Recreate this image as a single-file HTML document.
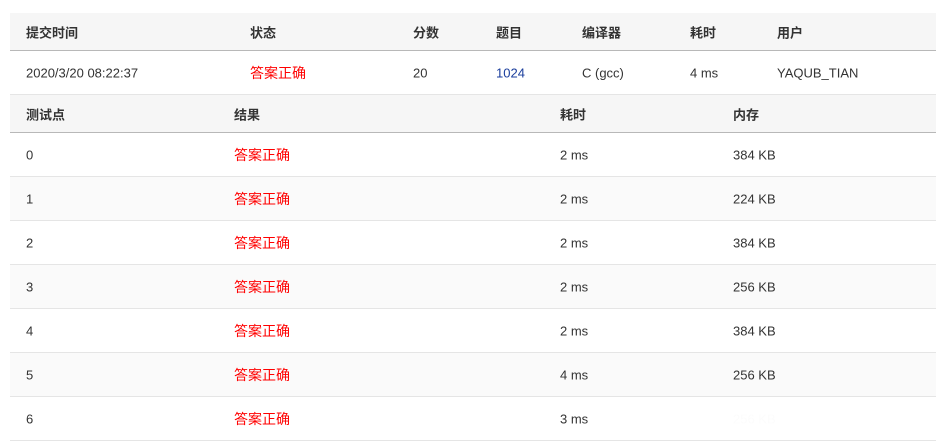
<!DOCTYPE html><html><head><meta charset="utf-8"><style>
body{margin:0;width:948px;height:440px;background:#fff;overflow:hidden;font-family:"Liberation Sans","Noto Sans CJK SC",sans-serif;font-size:13px;color:#333;position:relative}
.r{position:absolute;left:10px;width:926px;border-bottom:1px solid #e5e5e5;box-sizing:border-box}
.h{background:#f6f6f6;border-bottom:1px solid #b8b8b8;font-weight:bold;height:38px}
.d{height:44px}
.a{background:#fafafa}
.r span{position:absolute;top:50%;transform:translateY(-50%);white-space:nowrap}
.red{color:#f00;font-size:14px}
.blue{color:#1a3d9c}
</style></head><body>
<div class="r h" style="top:13px"><span style="left:16px">提交时间</span><span style="left:240px">状态</span><span style="left:403px">分数</span><span style="left:486px">题目</span><span style="left:572px">编译器</span><span style="left:680px">耗时</span><span style="left:767px">用户</span></div>
<div class="r d" style="top:51px"><span style="left:16px">2020/3/20 08:22:37</span><span class="red" style="left:240px">答案正确</span><span style="left:403px">20</span><span class="blue" style="left:486px">1024</span><span style="left:572px">C (gcc)</span><span style="left:680px">4 ms</span><span style="left:767px">YAQUB_TIAN</span></div>
<div class="r h" style="top:95px"><span style="left:16px">测试点</span><span style="left:224px">结果</span><span style="left:550px">耗时</span><span style="left:723px">内存</span></div>
<div class="r d" style="top:133px"><span style="left:16px">0</span><span class="red" style="left:224px">答案正确</span><span style="left:550px">2 ms</span><span style="left:723px">384 KB</span></div>
<div class="r d a" style="top:177px"><span style="left:16px">1</span><span class="red" style="left:224px">答案正确</span><span style="left:550px">2 ms</span><span style="left:723px">224 KB</span></div>
<div class="r d" style="top:221px"><span style="left:16px">2</span><span class="red" style="left:224px">答案正确</span><span style="left:550px">2 ms</span><span style="left:723px">384 KB</span></div>
<div class="r d a" style="top:265px"><span style="left:16px">3</span><span class="red" style="left:224px">答案正确</span><span style="left:550px">2 ms</span><span style="left:723px">256 KB</span></div>
<div class="r d" style="top:309px"><span style="left:16px">4</span><span class="red" style="left:224px">答案正确</span><span style="left:550px">2 ms</span><span style="left:723px">384 KB</span></div>
<div class="r d a" style="top:353px"><span style="left:16px">5</span><span class="red" style="left:224px">答案正确</span><span style="left:550px">4 ms</span><span style="left:723px">256 KB</span></div>
<div class="r d" style="top:397px"><span style="left:16px">6</span><span class="red" style="left:224px">答案正确</span><span style="left:550px">3 ms</span><span style="left:723px;color:#fcfcfc">256 KB</span></div>
</body></html>
